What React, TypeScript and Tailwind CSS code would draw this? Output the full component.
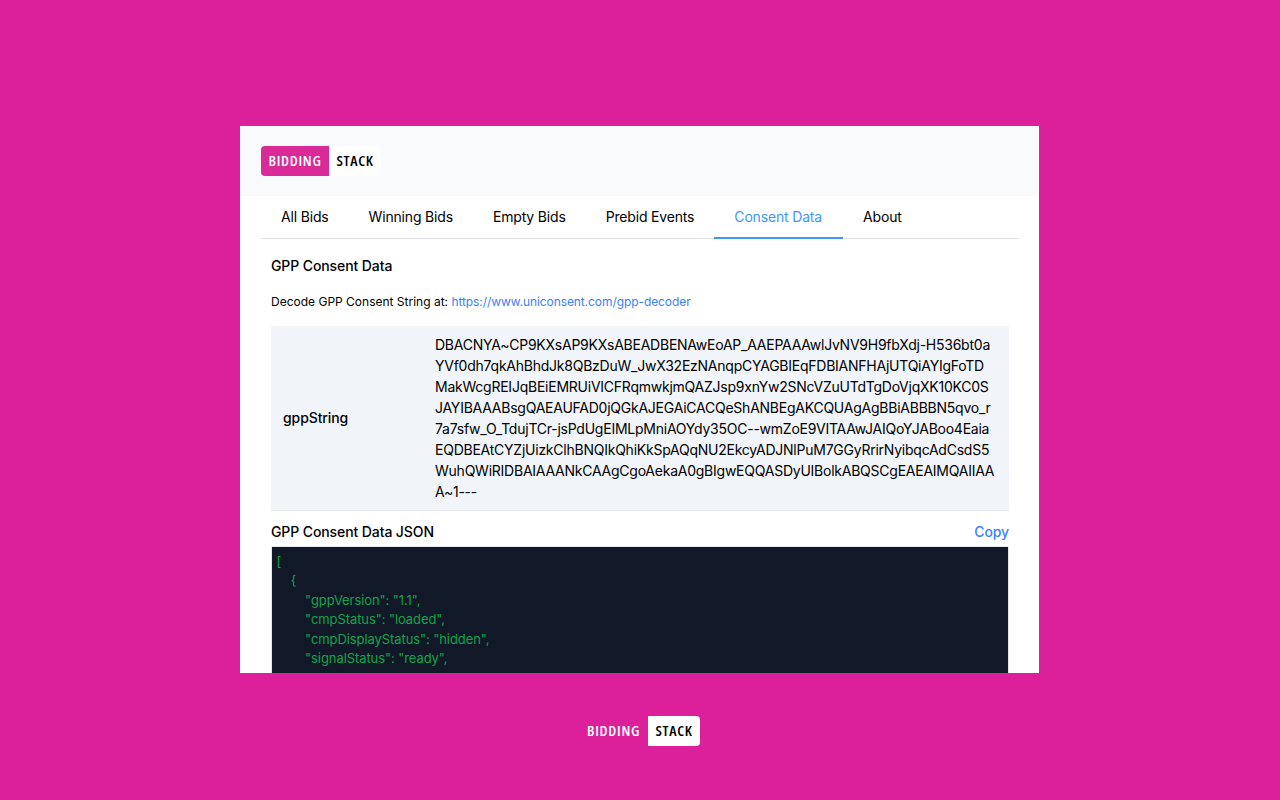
const tabs = ['All Bids', 'Winning Bids', 'Empty Bids', 'Prebid Events', 'Consent Data', 'About'];

const gppLines = [
  'DBACNYA~CP9KXsAP9KXsABEADBENAwEoAP_AAEPAAAwlJvNV9H9fbXdj-H536bt0a',
  'YVf0dh7qkAhBhdJk8QBzDuW_JwX32EzNAnqpCYAGBIEqFDBIANFHAjUTQiAYIgFoTD',
  'MakWcgREIJqBEiEMRUiVICFRqmwkjmQAZJsp9xnYw2SNcVZuUTdTgDoVjqXK10KC0S',
  'JAYIBAAABsgQAEAUFAD0jQGkAJEGAiCACQeShANBEgAKCQUAgAgBBiABBBN5qvo_r',
  '7a7sfw_O_TdujTCr-jsPdUgEIMLpMniAOYdy35OC--wmZoE9VITAAwJAIQoYJABoo4Eaia',
  'EQDBEAtCYZjUizkClhBNQIkQhiKkSpAQqNU2EkcyADJNlPuM7GGyRrirNyibqcAdCsdS5',
  'WuhQWiRIDBAIAAANkCAAgCgoAekaA0gBIgwEQQASDyUIBolkABQSCgEAEAIMQAIIAA',
  'A~1---',
];

const jsonText = `[
    {
        "gppVersion": "1.1",
        "cmpStatus": "loaded",
        "cmpDisplayStatus": "hidden",
        "signalStatus": "ready",
        "supportedAPIs": [`;

function Logo({ footer = false }: { footer?: boolean }) {
  const font = 'font-["Open_Sans",sans-serif] [font-stretch:75%] text-[15px] font-semibold tracking-[0.7px]';
  if (footer) {
    return (
      <div className={`flex h-[30px] w-[113px] items-center ${font}`}>
        <span className="mt-[-1px] w-[61px] text-white">BIDDING</span>
        <span className="flex h-full w-[52px] items-center justify-center rounded-r-[4px] bg-white pb-[2px] text-black">STACK</span>
      </div>
    );
  }
  return (
    <div className={`flex h-[30px] w-[120px] items-center ${font}`}>
      <span className="flex h-full w-[68px] items-center justify-center rounded-l-[4px] bg-[#d92a97] pb-[2px] text-white">BIDDING</span>
      <span className="flex h-full flex-1 items-center justify-center rounded-r-[4px] bg-white pb-[2px] text-black">STACK</span>
    </div>
  );
}

export default function App() {
  return (
    <div className="flex h-[800px] flex-col items-center overflow-hidden bg-[#dc1f9b] pt-[126px] font-['Inter',sans-serif] text-black">
      <div className="mr-px h-[547px] w-[799px] overflow-hidden bg-white">
        <div className="flex h-[70px] items-center bg-[#f9fafb] px-[21px]">
          <Logo />
        </div>
        <div className="pl-[21px] pr-[20px]">
          <div className="flex h-[43px] border-b border-[#e2e2e4]">
            {tabs.map((t) => (
              <div
                key={t}
                className={
                  t === 'Consent Data'
                    ? 'mb-[-1px] flex h-[43px] items-center border-b-2 border-[#4096ff] pl-5 pr-[21px] text-sm tracking-[-0.17px] text-[#4096ff]'
                    : 'flex items-center px-5 text-sm tracking-[-0.17px] text-black'
                }
              >
                {t}
              </div>
            ))}
          </div>
          <div className="px-[10px]">
            <h2 className="mt-[17px] text-sm font-medium leading-[20px] tracking-[-0.1px]">GPP Consent Data</h2>
            <p className="mt-[17px] text-xs leading-[18px]">
              Decode GPP Consent String at:{' '}
              <a className="tracking-[-0.08px] text-[#3b82f6]">https://www.uniconsent.com/gpp-decoder</a>
            </p>
            <div className="mt-[15px] flex h-[185px] items-center border-b border-[#e5e7eb] bg-[#f1f5f9] text-sm">
              <div className="w-[164px] shrink-0 px-3 font-medium tracking-[-0.1px]">gppString</div>
              <div className="min-w-0 flex-1 pr-3 leading-[21px] tracking-[-0.24px] whitespace-nowrap">
                {gppLines.map((l) => (
                  <div key={l}>{l}</div>
                ))}
              </div>
            </div>
            <div className="mt-[11px] flex items-center justify-between leading-[20px]">
              <span className="text-sm font-medium tracking-[-0.1px]">GPP Consent Data JSON</span>
              <button className="text-sm font-medium tracking-[-0.1px] text-[#3b82f6]">Copy</button>
            </div>
            <pre className="mt-[4px] border-t border-l border-r border-[#e5e7eb] bg-[#111827] px-[4.5px] pt-[4.5px] font-['Inter',sans-serif] text-[13px] leading-[19.5px] tracking-[-0.08px] text-[#16a34a]">
              {jsonText}
            </pre>
          </div>
        </div>
      </div>
      <div className="ml-[7px] mt-[43px]">
        <Logo footer />
      </div>
    </div>
  );
}
